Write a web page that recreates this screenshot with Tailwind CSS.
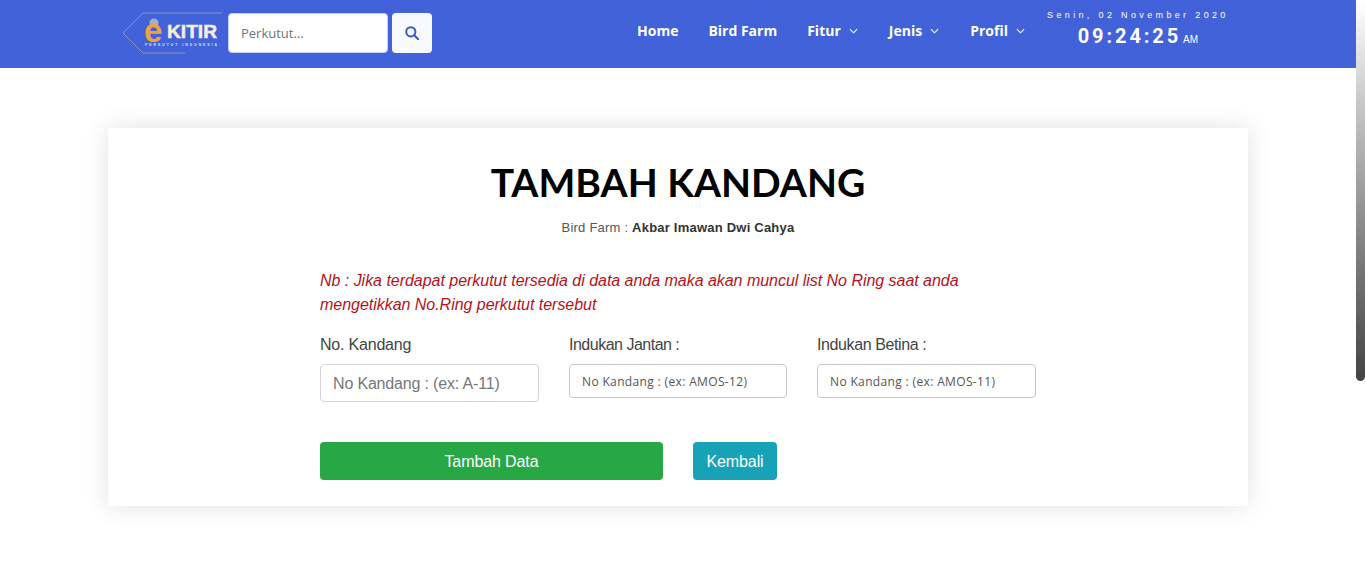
<!DOCTYPE html>
<html lang="id">
<head>
<meta charset="utf-8">
<title>Tambah Kandang</title>
<script src="https://cdn.jsdelivr.net/npm/@tailwindcss/browser@4"></script>
</head>
<body class="bg-white overflow-hidden">
<div class="flex w-[1365px] h-[585px] overflow-hidden font-['Liberation_Sans',Arial,sans-serif]">
  <div class="w-[1356px] shrink-0">
    <header class="relative z-10 h-[68px] bg-[#4162d8] flex items-center pl-[122px]">
      <svg class="w-[100px] h-[42px] shrink-0 mt-[-2px]" viewBox="0 0 100 42" role="img" aria-label="E-Kitir">
        <path d="M100 1H21L1 21l20 20h42" fill="none" stroke="#8f91b8" stroke-width="1"/>
        <circle cx="32" cy="11" r="4.5" fill="#9fb0c4"/>
        <text x="22" y="30" font-family="Liberation Sans, sans-serif" font-size="33" font-weight="700" fill="#eda53a">e</text>
        <text x="45" y="26" font-family="Liberation Sans, sans-serif" font-size="18" font-weight="700" fill="#f3ecdf" stroke="#f3ecdf" stroke-width=".5" textLength="50" lengthAdjust="spacingAndGlyphs">KITIR</text>
        <text x="23" y="33.5" font-family="Liberation Sans, sans-serif" font-size="3.4" font-weight="700" fill="#dfe4f7" textLength="72">PERKUTUT INDONESIA</text>
      </svg>
      <div class="ml-[6px] mt-[-2px] w-[160px] h-[40px] bg-white border border-[#c3cef2] rounded-[4px] pl-[12px] pt-[2px] flex items-center text-[13px] text-[#6c757d] font-['Open_Sans',sans-serif]">Perkutut...</div>
      <button class="ml-[4px] mt-[-2px] w-[40px] h-[40px] bg-[#f8f9fc] rounded-[4px] flex items-center justify-center" aria-label="Cari">
        <svg class="w-[14px] h-[14px]" viewBox="0 0 14 14" fill="none" stroke="#3b5cc4" stroke-width="2"><circle cx="5.8" cy="5.8" r="4.6"/><path d="M9.2 9.2l4 4" stroke-linecap="round"/></svg>
      </button>
      <nav class="ml-[205px] flex items-center gap-[30px] text-[14px] font-bold text-white font-['Open_Sans',sans-serif] mt-[-8px]">
        <span>Home</span>
        <span>Bird Farm</span>
        <span class="flex items-center gap-[8px]">Fitur <svg class="w-[9px] h-[6px] mt-[1px]" viewBox="0 0 10 6" fill="none" stroke="#fff" stroke-width="1.2"><path d="M1 1l4 4 4-4"/></svg></span>
        <span class="flex items-center gap-[8px] ml-[1px]">Jenis <svg class="w-[9px] h-[6px] mt-[1px]" viewBox="0 0 10 6" fill="none" stroke="#fff" stroke-width="1.2"><path d="M1 1l4 4 4-4"/></svg></span>
        <span class="flex items-center gap-[8px] ml-[1px]">Profil <svg class="w-[9px] h-[6px] mt-[1px]" viewBox="0 0 10 6" fill="none" stroke="#fff" stroke-width="1.2"><path d="M1 1l4 4 4-4"/></svg></span>
      </nav>
      <div class="ml-[20px] w-[186px] text-white text-center self-start pt-[9px]">
        <div class="text-[9px] leading-[12px] tracking-[3.35px] whitespace-nowrap">Senin, 02 November 2020</div>
        <div class="mt-[3px] flex items-baseline justify-center leading-[24px]">
          <span class="text-[20px] font-bold tracking-[2.9px] font-['Roboto',sans-serif]">09:24:25</span><span class="ml-[2px] text-[10px]">AM</span>
        </div>
      </div>
    </header>
    <main class="mt-[60px] mx-[108px] w-[1140px] h-[378px] bg-white shadow-[0_0_24px_rgba(0,0,0,0.12)] pt-[34px]">
      <h1 class="text-center text-[39px] leading-[40px] font-bold text-black font-['Lato',sans-serif]">TAMBAH KANDANG</h1>
      <p class="mt-[17px] text-center text-[13px] leading-[18px] text-[#555] tracking-[.22px]">Bird Farm : <b class="text-[#333] font-bold">Akbar Imawan Dwi Cahya</b></p>
      <div class="mt-[32px] ml-[212px] w-[716px]">
        <p class="italic text-[16px] leading-[24px] text-[#b5121b] tracking-[-.03px]">Nb : Jika terdapat perkutut tersedia di data anda maka akan muncul list No Ring saat anda<br>mengetikkan No.Ring perkutut tersebut</p>
        <div class="mt-[16px] flex gap-[30px] items-start text-[#444]">
          <div class="w-[219px]">
            <div class="text-[16px] leading-[24px] tracking-[-.2px]">No. Kandang</div>
            <div class="mt-[7px] h-[38px] border border-[#ced4da] rounded-[4px] pl-[12px] pt-[2px] flex items-center text-[16px] tracking-[-.17px] text-[#777]">No Kandang : (ex: A-11)</div>
          </div>
          <div class="w-[218px]">
            <div class="text-[16px] leading-[24px] tracking-[-.5px]">Indukan Jantan :</div>
            <div class="mt-[7px] h-[34px] border border-[#c4c8cc] rounded-[4px] pl-[12px] pt-[2px] flex items-center text-[12px] tracking-[.35px] text-[#555] font-['Open_Sans',sans-serif]">No Kandang : (ex: AMOS-12)</div>
          </div>
          <div class="w-[219px]">
            <div class="text-[16px] leading-[24px] tracking-[-.4px]">Indukan Betina :</div>
            <div class="mt-[7px] h-[34px] border border-[#c4c8cc] rounded-[4px] pl-[12px] pt-[2px] flex items-center text-[12px] tracking-[.35px] text-[#555] font-['Open_Sans',sans-serif]">No Kandang : (ex: AMOS-11)</div>
          </div>
        </div>
        <div class="mt-[40px] flex gap-[30px]">
          <button class="w-[343px] h-[38px] bg-[#28a745] rounded-[4px] pt-[2px] text-white text-[16px] tracking-[-.1px]">Tambah Data</button>
          <button class="w-[84px] h-[38px] bg-[#17a2b8] rounded-[4px] pt-[2px] text-white text-[16px] tracking-[-.1px]">Kembali</button>
        </div>
      </div>
    </main>
  </div>
  <div class="w-[9px] h-[381px] rounded-b-[5px] bg-gradient-to-b from-white to-[#444]"></div>
</div>
</body>
</html>
